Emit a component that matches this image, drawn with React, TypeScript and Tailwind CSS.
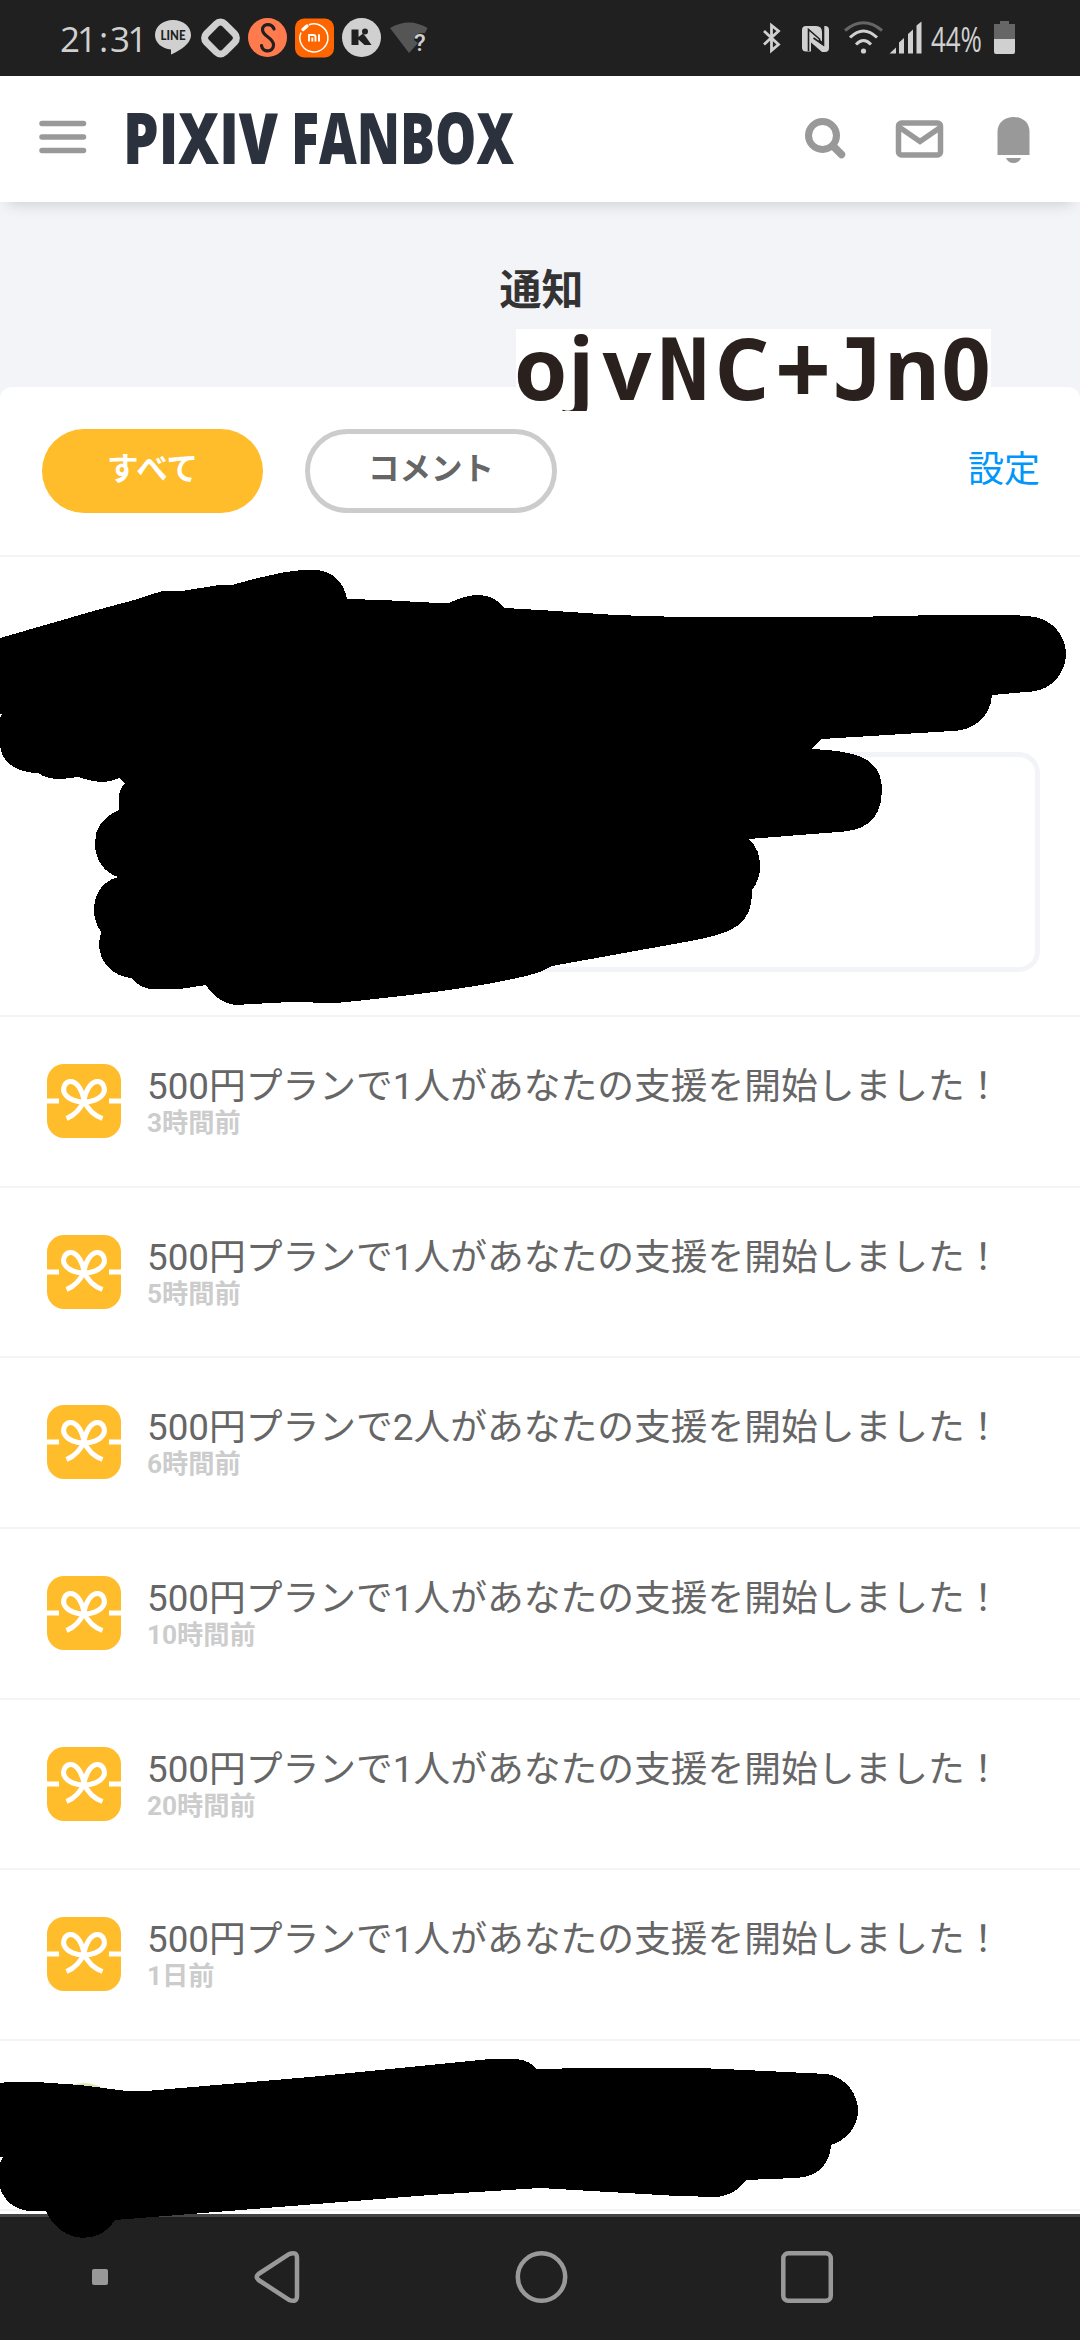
const notifications = [
    { id: 1, count: 1, time: "3時間前" },
    { id: 2, count: 1, time: "5時間前" },
    { id: 3, count: 2, time: "6時間前" },
    { id: 4, count: 1, time: "10時間前" },
    { id: 5, count: 1, time: "20時間前" },
    { id: 6, count: 1, time: "1日前" },
];

function StatusBar() {
    return (
        <div className="flex h-[76px] shrink-0 items-center bg-[#202020] pl-[58px] pr-[61px] text-[#d0d0d0]">
            <svg width="94" height="60" className="shrink-0" fill="currentColor">
                <text x="2 19 41 52 69.500" y="44" className="font-['Open_Sans'] text-[35px]">21:31</text>
            </svg>
            <svg width="288" height="40" className="ml-[2px] shrink-0" fill="#d0d0d0">
                {/* LINE */}
                <path d="M19 2C9 2 1 8.500 1 17C1 25 8 30.500 17 31.500V36.500C24 33.500 37 26.500 37 17C37 8.500 29 2 19 2Z" />
                <text x="6.500" y="22" textLength="25" lengthAdjust="spacingAndGlyphs" fill="#202020" className="font-[Lato] text-[14px] font-black">LINE</text>
                <rect x="53.500" y="7" width="26" height="26" rx="6" transform="rotate(45 66.500 20)" fill="none" stroke="#d0d0d0" strokeWidth="7" />
                <circle cx="113.500" cy="19.500" r="19.500" fill="#ff7b4d" />
                <path d="M120 11C118 5 108.500 5 108.500 11.500C108.500 19 119.500 19 119.500 27C119.500 34.500 108.500 35 107.500 27.500" fill="none" stroke="#202020" strokeWidth="3.200" strokeLinecap="round" />
                <rect x="141" y="0.500" width="39" height="39" rx="9" fill="#ff6600" />
                <path d="M155 6.800A14 14 0 1 1 147 14.500" fill="none" stroke="white" strokeWidth="1.500" />
                <path d="M149 11.500L153 8" stroke="white" strokeWidth="3.400" strokeLinecap="round" />
                <path d="M155 23.500V17H159.500Q161.500 17 161.500 19V23.500M158.300 19.500V23.500M165 16.200V23.500" fill="none" stroke="white" strokeWidth="1.900" />
                <circle cx="207.500" cy="19.500" r="19.500" />
                <path d="M197.500 11.500H204.500V19L209 15.500L212 19L217.500 27H210.500L204.500 21.500V27H197.500Z" fill="#202020" />
                <circle cx="211" cy="13.500" r="3" fill="#202020" />
                <path d="M236 10Q255 -1 273.500 10L271 15Q260 14 260 22L264 25L255 35Z" fill="#555555" />
                <text x="260" y="33" className="font-[Roboto] text-[24px] font-medium">?</text>
            </svg>
            <svg width="262" height="40" className="ml-auto shrink-0" fill="#d0d0d0">
                <path d="M7 13L21.500 26.500L14.500 32.500V7.500L21.500 13L7 26.500" fill="none" stroke="#d0d0d0" strokeWidth="2.800" />
                <path d="M49 8H59Q65 8 65 14V23.500L57 17V23.500L61 26.500L54 21V33.500H49Q45 33.500 45 29.500V12Q45 8 49 8Z" />
                <path d="M66 8H68Q72 8 72 12V30Q72 34 68 34H65L53.500 24V11.500L62 20V24.500L67 28Z" />
                <path d="M51.500 33V11.500L62.500 21V24.500M66.500 8V27L56.500 20" fill="none" stroke="#202020" strokeWidth="1.600" />
                <g fill="none" stroke="#d0d0d0" strokeWidth="3">
                    <path d="M88 12.500Q106.500 -3 125 12.500" stroke="#666666" />
                    <path d="M93 19.500Q106.500 6.500 120 19.500" />
                    <path d="M99 26.500Q106.500 18.500 114 26.500" />
                </g>
                <circle cx="106.500" cy="33" r="2.600" />
                <path d="M132.500 35.500L139 29.500V35.500ZM142 35.500V24.500L147 20V35.500ZM151 35.500V16L156 11.500V35.500ZM159.500 35.500V7.500L164.500 3.500V35.500Z" />
                <text x="174" y="33.500" textLength="51" lengthAdjust="spacingAndGlyphs" className="font-['Open_Sans'] text-[35px]">44%</text>
                <path d="M237 21V6H243V3H252V6H258V21Z" fill="#666666" />
                <path d="M237 21H258V34Q258 36 256 36H239Q237 36 237 34Z" />
            </svg>
        </div>
    );
}

function Header() {
    return (
        <header className="relative z-10 flex h-[126px] shrink-0 items-center bg-white pl-[39px] pr-[47px] shadow-[0_10px_14px_-8px_rgba(0,0,0,0.16)]">
            <svg width="48" height="40" className="-mt-[9px]" stroke="#999999" strokeWidth="5.500" strokeLinecap="round">
                <path d="M3 8.500H44.500M3 22H44.500M3 35.500H44.500" />
            </svg>
            <svg width="404" height="110" className="ml-[32px]" fill="#2b323d">
                <text x="4" y="80" textLength="155" lengthAdjust="spacingAndGlyphs" className="font-['Open_Sans'] text-[70px] font-extrabold">PIXIV</text>
                <text x="172" y="80" textLength="223" lengthAdjust="spacingAndGlyphs" className="font-['Open_Sans'] text-[70px] font-extrabold">FANBOX</text>
            </svg>
            <svg width="230" height="52" className="ml-auto" fill="none" stroke="#999999">
                <circle cx="19.500" cy="22.500" r="14" strokeWidth="7" />
                <path d="M30 33L38.500 41.500" strokeWidth="7.500" strokeLinecap="round" />
                <rect x="95.500" y="10" width="42" height="32" rx="3" strokeWidth="5.500" />
                <path d="M96 14L117 28.500L138 14" strokeWidth="5.500" />
                <path d="M194.500 42V18.500C194.500 -1 226.500 -1 226.500 18.500V42Z" fill="#999999" stroke="none" />
                <path d="M203 45H218Q216 50 210.500 50Q205 50 203 45Z" fill="#999999" stroke="none" />
            </svg>
        </header>
    );
}

function GiftIcon() {
    return (
        <svg width="74" height="74" className="shrink-0" fill="none" stroke="white" strokeWidth="5">
            <rect width="74" height="74" rx="17" fill="#ffbc2b" stroke="none" />
            <path d="M0 37H12M62 37H74" />
            <path d="M37 36C34 22 28 17 23 17.500C17 18 15 26 18 30C21 35 29 38 37 38C45 38 53 35 56 30C59 26 57 18 51 17.500C46 17 40 22 37 36Z" />
            <path d="M37 37C33 46 28 51 19.500 54.500M37 37C41 46 46 51 55.500 54.500" />
        </svg>
    );
}

function NotificationRow({ count, time }: { count: number; time: string }) {
    return (
        <div className="flex h-[170.67px] shrink-0 gap-[26px] border-b-2 border-[#f3f4f8] pl-[47px] pt-[47px]">
            <GiftIcon />
            <div className="pt-px">
                <div className="whitespace-nowrap text-[36.75px] leading-[44px] text-[#666666]">
                    500円プランで{count}人があなたの支援を開始しました！
                </div>
                <div className="text-[26.25px] font-bold leading-[28px] text-[#cccccc]">{time}</div>
            </div>
        </div>
    );
}

function NavBar() {
    return (
        <nav className="flex h-[126px] shrink-0 items-center border-t-[3px] border-[#444444] bg-[#202020] pb-[3px] pl-[92px]">
            <div className="size-4 rounded-xs bg-[#999999]" />
            <svg width="50" height="56" className="ml-[144px]" fill="none" stroke="#999999" strokeWidth="4.500" strokeLinejoin="round">
                <path d="M37 5.200L6.500 25Q3 28 6.500 31L37 50.800Q45 54 45 47V9Q45 2 37 5.200Z" />
            </svg>
            <svg width="56" height="56" className="ml-[211px]" fill="none" stroke="#999999" strokeWidth="4.500">
                <circle cx="28.500" cy="28" r="23.700" />
            </svg>
            <svg width="56" height="56" className="ml-[210px]" fill="none" stroke="#999999" strokeWidth="4.500">
                <rect x="4.300" y="4.300" width="47.500" height="47.500" rx="5" />
            </svg>
        </nav>
    );
}

// text sticker pasted over the page title area
function Sticker() {
    return (
        <svg width="475" height="82" className="absolute left-[516px] top-[329px] z-20 bg-white" fill="#2a211e" textAnchor="middle">
            <text x="24.500 65 111 167.500 226 287 342 396 450" y="71 71 71 71 71 76 71 71 71" className="font-['Open_Sans'] text-[86px] font-bold">
                ojv<tspan className="font-['DejaVu_Sans_Mono']">N</tspan>C<tspan className="text-[98px]">+</tspan><tspan className="font-['DejaVu_Sans_Mono']">J</tspan>n0
            </text>
        </svg>
    );
}

function Marker() {
    return (
        <svg width="1080" height="2340" className="absolute left-0 top-0 z-20" fill="black" shapeRendering="crispEdges">
            <path d="M0 638L97 610L138 599Q155 593 163 591L185 590.500L216 585.500L232 585C260 577 290 570 305 570H318Q342 574 347 599L383 600L447 603.500C460 598 470 595 478 595Q494 595 505 608L540 610L615 615L680 617H850L940 615H1012L1027 616C1054 617 1066 638 1066 654C1066 672 1052 690 1032 691.500L992 695C991 715 975 731 952 731L822 739L811 749C855 751 882 757 882 790C882 825 858 831 838 832L749 839C757 847 760 855 760 866C760 877 757 883 752 890C752 910 747 915 742 922C730 933 712 937 685 942L552 966L540 972Q490 988 336 1003L290 1002L235 1005Q217 1002 206 985L180 989H150Q139 987 131 978C112 976 99 962 99 943L101 932Q94 921 94 911C94 893 103 881 118 877C103 872 95 859 95 843C95 828 103 816 119 810C118 800 118 790 125 783L119 778C106 784 98 783 78 777C60 780 48 780 38 773C17 773 1 763 0 744V718L2 714H0Z" />
            <path d="M0 2083L8 2082H37L80 2085L127 2091H146L310 2077L490 2059H516Q529 2060 537 2069L586 2068H700L745 2070L827 2074C846 2077 858 2095 858 2110C858 2126 847 2140 831 2145C830 2164 818 2177 796 2178L746 2180Q735 2195 717 2197L678 2196L540 2188L430 2195L115 2220C100 2246 60 2244 46 2211H28Q7 2208 0 2188V2163L3 2157H0Z" />
        </svg>
    );
}

export default function App() {
    return (
        <div className="relative flex h-[2340px] w-[1080px] flex-col overflow-hidden bg-[#f3f4f8] font-[Roboto,'Noto_Sans_CJK_JP',sans-serif]">
            <StatusBar />
            <Header />
            <h1 className="h-[185px] shrink-0 pl-[3px] pt-[57px] text-center text-[42px] font-bold leading-[64px] text-[#333333]">通知</h1>
            <main className="flex h-[1827px] shrink-0 flex-col overflow-hidden rounded-t-[12px] bg-white">
                <div className="flex h-[170px] shrink-0 items-center border-b-2 border-[#f3f4f8] px-[42px] font-bold">
                    <button className="h-[84px] w-[221px] rounded-full bg-[#ffbc2b] pb-0.5 text-[31.5px] text-white">すべて</button>
                    <button className="ml-[42px] h-[84px] w-[252px] rounded-full border-[5px] border-[#cccccc] pb-0.5 text-[31.5px] text-[#666666]">コメント</button>
                    <a className="-mr-0.5 ml-auto pb-0.5 text-[36px] font-normal text-[#0096fa]">設定</a>
                </div>
                <div className="h-[460px] shrink-0 border-b-2 border-[#f3f4f8] pl-[148px] pr-[40px] pt-[195px]">
                    <div className="h-[220px] rounded-[21px] border-[5px] border-[#f3f4f8]" />
                </div>
                {notifications.map((item) => (
                    <NotificationRow key={item.id} count={item.count} time={item.time} />
                ))}
                <div className="h-[170px] shrink-0 border-b-2 border-[#f3f4f8] pl-[47px] pt-[42px]">
                    <div className="size-[74px] rounded-full bg-[#d5e8b5]" />
                </div>
            </main>
            <NavBar />
            <Sticker />
            <Marker />
        </div>
    );
}
